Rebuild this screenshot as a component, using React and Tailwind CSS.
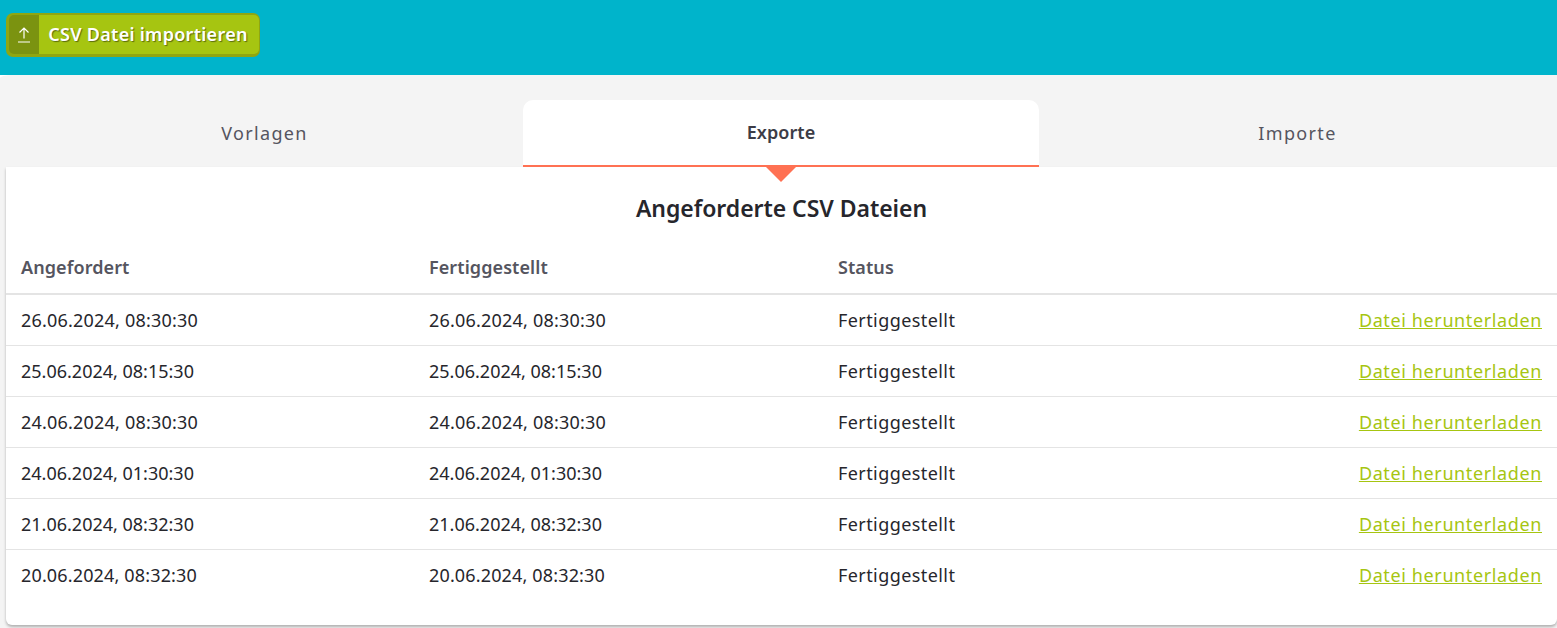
import React from 'react'

const rows = [
  { date: '26.06.2024, 08:30:30', track: 'tracking-[0.2px]' },
  { date: '25.06.2024, 08:15:30', track: 'tracking-[0px]' },
  { date: '24.06.2024, 08:30:30', track: 'tracking-[0.2px]' },
  { date: '24.06.2024, 01:30:30', track: 'tracking-[0px]' },
  { date: '21.06.2024, 08:32:30', track: 'tracking-[0px]' },
  { date: '20.06.2024, 08:32:30', track: 'tracking-[0.15px]' },
]

const font = "font-['Noto_Sans','Open_Sans',sans-serif]"

function Tab({ label, active }) {
  if (active) {
    return (
      <div className="relative flex h-[67px] w-[516px] items-center justify-center rounded-t-[10px] border-b-2 border-[#ff7153] bg-white text-[18px] font-semibold tracking-[0.05px] text-[#3c3c46]">
        {label}
        <span className="absolute left-1/2 top-[65px] z-10 h-0 w-0 -translate-x-1/2 border-x-[17px] border-t-[17px] border-x-transparent border-t-[#ff7153]" />
      </div>
    )
  }
  return (
    <div className="flex h-[67px] flex-1 items-center justify-center text-[18px] tracking-[1.35px] text-[#55555f]">
      {label}
    </div>
  )
}

export default function App() {
  return (
    <div className={`h-[628px] w-full overflow-hidden bg-white ${font}`}>
      <div className="flex h-[75px] items-start bg-[#00b4cb] px-[6px] pt-[13px]">
        <button className="flex h-[44px] w-[254px] rounded-[7px] bg-[#8fa612] pb-[3px] pl-[3px] pr-[1px] pt-[2px]">
          <span className="flex h-[39px] w-[30px] items-center justify-center rounded-l-[5px] bg-[#7b9310]">
            <svg width="14" height="16" viewBox="0 0 14 16" fill="none" stroke="white" strokeWidth="1.2">
              <path d="M7 11.5V1M2.5 5.5L7 1L11.5 5.5M1 15H13" />
            </svg>
          </span>
          <span className="flex h-[39px] flex-1 items-center justify-center rounded-r-[5px] bg-[#a6c511] pr-[2px] text-[18px] font-semibold tracking-[0.27px] text-white [text-shadow:1px_1px_1px_rgba(0,0,0,0.45)]">
            CSV Datei importieren
          </span>
        </button>
      </div>
      <div className="h-[553px] rounded-tl-[12px_3px] bg-[#f4f4f4] pl-[6px] pt-[25px]">
        <div className="relative z-10 flex pr-[1px]">
          <Tab label="Vorlagen" />
          <Tab label="Exporte" active />
          <Tab label="Importe" />
        </div>
        <div className="h-[458px] rounded-b-[6px] bg-white shadow-[0_2px_3px_rgba(0,0,0,0.28)]">
          <h2 className="flex h-[82px] items-center justify-center text-[23px] font-semibold leading-[32px] tracking-[-0.05px] text-[#26262c]">
            Angeforderte CSV Dateien
          </h2>
          <div className="grid h-[46px] grid-cols-[408px_409px_1fr] items-center border-b-2 border-[#e4e4e4] px-[15px] pb-[7px] text-[18px] font-semibold tracking-[0.08px] text-[#55555f]">
            <span>Angefordert</span>
            <span>Fertiggestellt</span>
            <span>Status</span>
          </div>
          {rows.map((row, i) => (
            <div
              key={row.date}
              className={`grid h-[51px] grid-cols-[408px_409px_1fr_auto] items-center px-[15px] text-[18px] text-[#26262c] ${i < rows.length - 1 ? 'border-b border-[#e4e4e4]' : ''}`}
            >
              <span className={row.track}>{row.date}</span>
              <span className={row.track}>{row.date}</span>
              <span className="tracking-[0.42px]">Fertiggestellt</span>
              <a href="#" className="tracking-[0.62px] text-[#a6c511] underline">Datei herunterladen</a>
            </div>
          ))}
        </div>
      </div>
    </div>
  )
}
